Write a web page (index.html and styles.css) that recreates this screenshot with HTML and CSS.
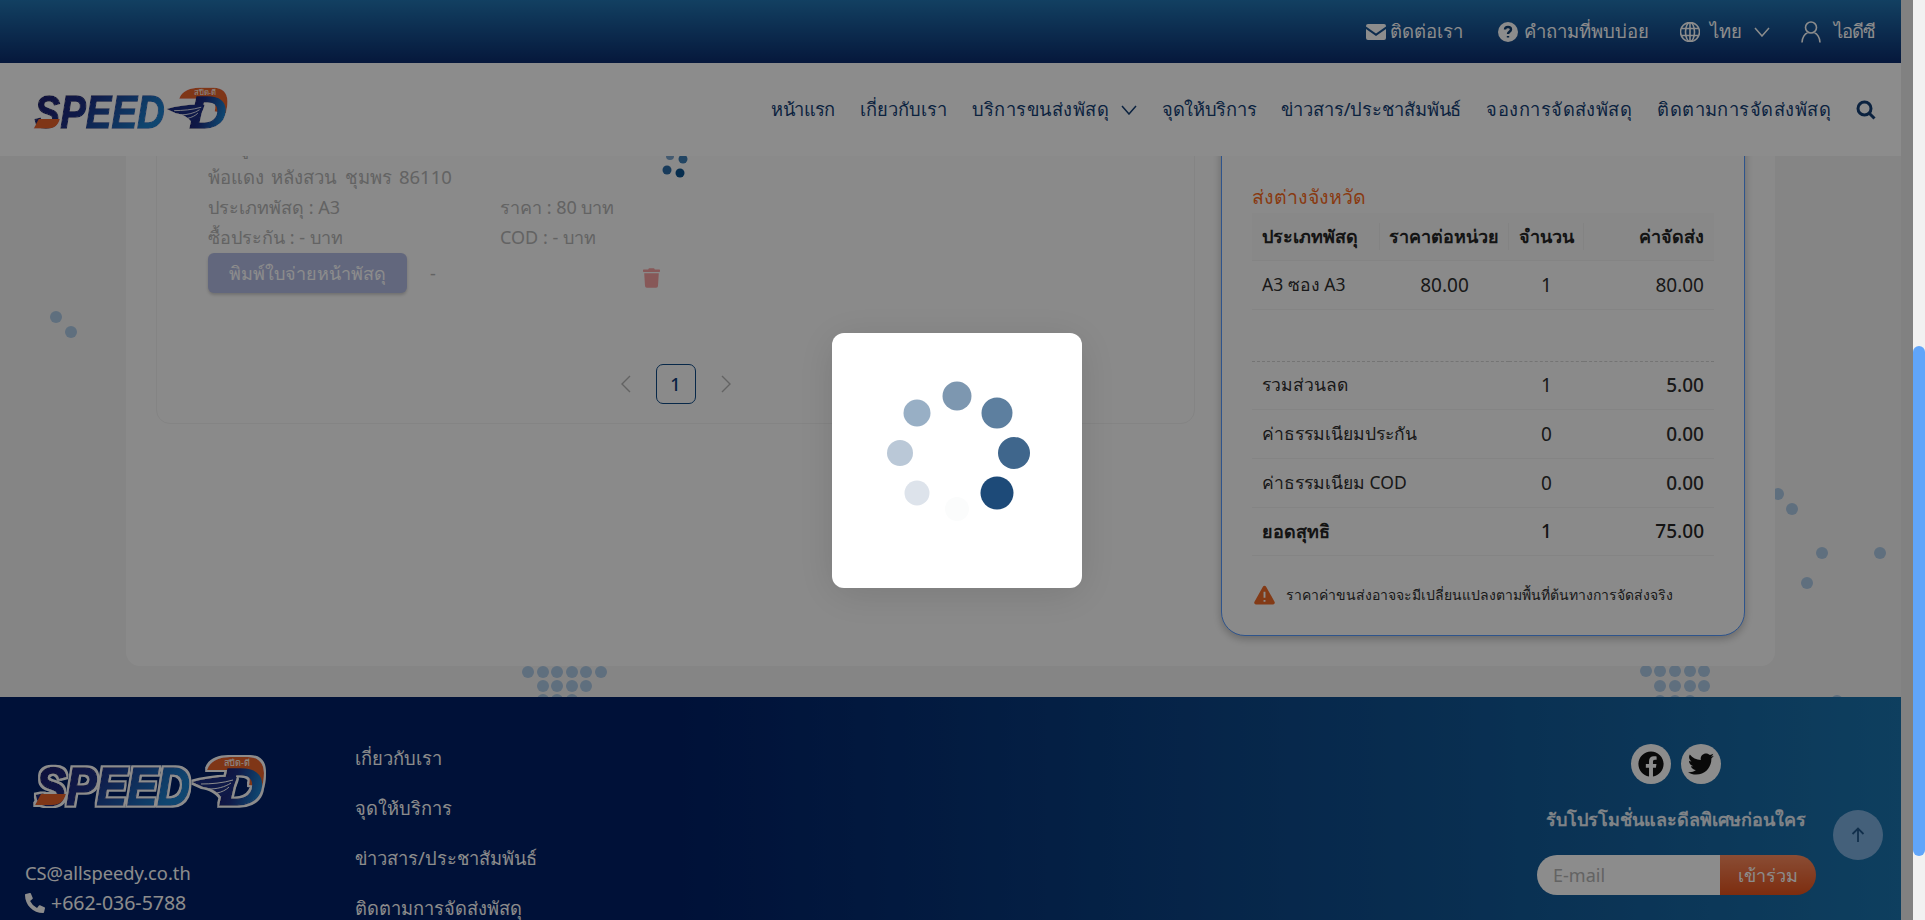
FILE: index.html
```html
<!DOCTYPE html>
<html lang="th">
<head>
<meta charset="utf-8">
<title>Speed-D</title>
<link rel="stylesheet" href="styles.css">
</head>
<body>
<svg class="defs" width="0" height="0" aria-hidden="true">
  <defs>
    <linearGradient id="logoBlue" x1="0" y1="0" x2="1" y2="0.35">
      <stop offset="0" stop-color="#1b1c68"/><stop offset=".45" stop-color="#1b2f84"/><stop offset="1" stop-color="#1f80cc"/>
    </linearGradient>
    <filter id="logoHalo" x="-5%" y="-15%" width="110%" height="130%">
      <feMorphology in="SourceAlpha" operator="dilate" radius="2.200" result="fat"/>
      <feFlood flood-color="#ffffff"/>
      <feComposite in2="fat" operator="in" result="halo"/>
      <feMerge><feMergeNode in="halo"/><feMergeNode in="SourceGraphic"/></feMerge>
    </filter>
    <symbol id="logo" viewBox="0 0 234 53">
      <g filter="url(#logoHalo)">
        <path class="logo-orange" d="M174 15c3-9 12-13 23-13h18c10 0 16 6 16 16 0 6-1 10-2 14l-13-2c2-10-1-15-10-15z"/>
        <text class="logo-word" x="3" y="50" textLength="154" lengthAdjust="spacingAndGlyphs">SPEED</text>
        <path class="logo-orange" d="M2 50l6-11h25c-2 7-6 11-14 11z"/>
        <text class="logo-d" x="186" y="50" textLength="44" lengthAdjust="spacingAndGlyphs">D</text>
        <path class="logo-wing" d="M159 27c14-4 30-6 45-5-2 9-7 16-16 20-3-5-10-9-18-10z"/>
      </g>
      <path class="logo-feather" d="M168 29c10 0 22-1 32-4M176 34c8 0 16-2 22-6M184 38c5-1 9-3 12-6"/>
      <text class="logo-tiny" x="191" y="11">สปีด-ดี</text>
    </symbol>
  </defs>
</svg>

<div class="page">
  <div class="page-inner">
    <header class="topbar">
      <a class="top-link contact"><svg class="ic-env" viewBox="0 0 20 16"><path d="M2 0h16a2 2 0 0 1 2 2v.6l-10 7-10-7V2a2 2 0 0 1 2-2zM0 5l10 7 10-7v9a2 2 0 0 1-2 2H2a2 2 0 0 1-2-2z"/></svg><span>ติดต่อเรา</span></a>
      <a class="top-link"><svg class="ic-q" viewBox="0 0 20 20"><circle cx="10" cy="10" r="10"/><path class="ic-q-mark" d="M7 7.6C7 5.9 8.3 5 10 5s3 1 3 2.5c0 2.3-3 2.3-3 4.4M10 14v1.6"/></svg><span>คำถามที่พบบ่อย</span></a>
      <a class="top-link lang"><svg class="ic-globe" viewBox="0 0 20 20"><circle cx="10" cy="10" r="9.5"/><ellipse cx="10" cy="10" rx="4.5" ry="9.5"/><path d="M1 6.5h18M1 13.5h18M10 .5v19"/></svg><span>ไทย</span><svg class="ic-chev" viewBox="0 0 16 10"><path d="M1 1l7 8 7-8"/></svg></a>
      <a class="top-link user"><svg class="ic-user" viewBox="0 0 20 22"><circle cx="10" cy="6.5" r="5.5"/><path d="M1 21.500c0-5 3-9 5.500-9.500M19 21.500c0-5-3-9-5.500-9.500"/></svg><span class="user-name">ไอดีซี</span></a>
    </header>

    <nav class="navbar">
      <svg class="nav-logo"><use href="#logo"/></svg>
      <div class="nav-links">
        <a class="tight-lg">หน้าแรก</a>
        <a>เกี่ยวกับเรา</a>
        <a class="has-chev wide">บริการขนส่งพัสดุ<svg class="ic-chev dark" viewBox="0 0 16 10"><path d="M1 1l7 8 7-8"/></svg></a>
        <a class="tight">จุดให้บริการ</a>
        <a class="tight-sm">ข่าวสาร/ประชาสัมพันธ์</a>
        <a class="wide">จองการจัดส่งพัสดุ</a>
        <a class="wide">ติดตามการจัดส่งพัสดุ</a>
        <svg class="ic-search" viewBox="0 0 20 20"><circle cx="8.500" cy="8.500" r="6.500"/><path d="M13.500 13.500L18.500 18.500"/></svg>
      </div>
    </nav>

    <main class="main">
      <svg class="deco deco-back" viewBox="0 0 1901 541" aria-hidden="true">
        <circle cx="56" cy="161" r="6"/><circle cx="71" cy="176" r="6"/>
        <circle cx="1778" cy="338" r="6"/><circle cx="1792" cy="353" r="6"/><circle cx="1822" cy="397" r="6"/><circle cx="1880" cy="397" r="6"/><circle cx="1807" cy="427" r="6"/>
        <circle cx="528" cy="516" r="6"/><circle cx="543" cy="516" r="6"/><circle cx="557" cy="516" r="6"/><circle cx="572" cy="516" r="6"/><circle cx="586" cy="516" r="6"/><circle cx="601" cy="516" r="6"/>
        <circle cx="543" cy="530" r="6"/><circle cx="557" cy="530" r="6"/><circle cx="572" cy="530" r="6"/><circle cx="586" cy="530" r="6"/>
        <circle cx="543" cy="544" r="6"/><circle cx="557" cy="544" r="6"/><circle cx="572" cy="544" r="6"/>
        <circle cx="1646" cy="515" r="6"/><circle cx="1660" cy="515" r="6"/><circle cx="1675" cy="515" r="6"/><circle cx="1690" cy="515" r="6"/><circle cx="1704" cy="515" r="6"/>
        <circle cx="1660" cy="530" r="6"/><circle cx="1675" cy="530" r="6"/><circle cx="1690" cy="530" r="6"/><circle cx="1704" cy="530" r="6"/>
        <circle cx="1660" cy="545" r="6"/><circle cx="1675" cy="545" r="6"/><circle cx="1690" cy="545" r="6"/><circle cx="1837" cy="545" r="6"/>
      </svg>

      <div class="card">
        <section class="left-panel">
          <article class="item">
            <p class="item-line">ที่ หมู่ 1</p>
            <p class="item-line addr">พ้อแดง หลังสวน ชุมพร 86110</p>
            <div class="item-grid">
              <span>ประเภทพัสดุ : A3</span><span>ราคา : 80 บาท</span>
              <span>ซื้อประกัน : - บาท</span><span>COD : - บาท</span>
            </div>
            <div class="item-actions">
              <button class="print-btn">พิมพ์ใบจ่ายหน้าพัสดุ</button>
              <span class="dash">-</span>
              <svg class="ic-trash" viewBox="0 0 448 512"><path d="M432 32H312l-9.400-18.700A24 24 0 0 0 281.100 0H166.800a23.720 23.720 0 0 0-21.400 13.300L136 32H16A16 16 0 0 0 0 48v32a16 16 0 0 0 16 16h416a16 16 0 0 0 16-16V48a16 16 0 0 0-16-16zM53.200 467a48 48 0 0 0 47.900 45h245.800a48 48 0 0 0 47.900-45L416 128H32z"/></svg>
            </div>
          </article>
          <div class="pager">
            <svg class="pager-arrow" viewBox="0 0 10 18"><path d="M9 1L1 9l8 8"/></svg>
            <span class="pager-num">1</span>
            <svg class="pager-arrow" viewBox="0 0 10 18"><path d="M1 1l8 8-8 8"/></svg>
          </div>
        </section>

        <aside class="right-panel">
          <h3 class="panel-title">ส่งต่างจังหวัด</h3>
          <table class="rates">
            <colgroup><col class="c1"><col class="c2"><col class="c3"><col class="c4"></colgroup>
            <thead>
              <tr><th class="ta-l"><span class="th-in">ประเภทพัสดุ</span></th><th><span class="th-in">ราคาต่อหน่วย</span></th><th><span class="th-in">จำนวน</span></th><th class="ta-r"><span class="th-in">ค่าจัดส่ง</span></th></tr>
            </thead>
            <tbody>
              <tr class="row-item"><td class="ta-l">A3 ซอง A3</td><td class="num">80.00</td><td class="num">1</td><td class="ta-r num">80.00</td></tr>
              <tr class="row-gap"><td colspan="4"></td></tr>
              <tr><td colspan="2" class="ta-l">รวมส่วนลด</td><td class="num">1</td><td class="ta-r num strong">5.00</td></tr>
              <tr class="row-tall"><td colspan="2" class="ta-l">ค่าธรรมเนียมประกัน</td><td class="num">0</td><td class="ta-r num strong">0.00</td></tr>
              <tr class="row-tall"><td colspan="2" class="ta-l">ค่าธรรมเนียม COD</td><td class="num">0</td><td class="ta-r num strong">0.00</td></tr>
              <tr class="row-total"><td colspan="2" class="ta-l">ยอดสุทธิ</td><td class="num">1</td><td class="ta-r num">75.00</td></tr>
            </tbody>
          </table>
          <p class="notice">
            <svg class="ic-warn" viewBox="0 0 22 20"><path class="warn-bg" d="M9.300 1.300a2 2 0 0 1 3.400 0l8.800 15.700a2 2 0 0 1-1.700 3H2.200a2 2 0 0 1-1.700-3z"/><path class="warn-mark" d="M11 6.500v6.500M11 15.200v1.800"/></svg>
            <span>ราคาค่าขนส่งอาจจะมีเปลี่ยนแปลงตามพื้นที่ต้นทางการจัดส่งจริง</span>
          </p>
        </aside>
      </div>

      <svg class="deco deco-front" viewBox="0 0 1901 541" aria-hidden="true">
        <circle class="d1" cx="670" cy="0" r="4"/><circle class="d2" cx="683" cy="3" r="4.500"/><circle class="d3" cx="667" cy="14" r="4.500"/><circle class="d4" cx="680" cy="17" r="4.500"/>
      </svg>
    </main>

    <footer class="footer">
      <div class="foot-contact">
        <svg class="foot-logo"><use href="#logo"/></svg>
        <p class="email">CS@allspeedy.co.th</p>
        <p class="phone"><svg class="ic-phone" viewBox="0 0 512 512"><path d="M497.390 361.800l-112-48a24 24 0 0 0-28 6.900l-49.600 60.600A370.660 370.660 0 0 1 130.600 204.110l60.600-49.600a23.940 23.940 0 0 0 6.900-28l-48-112A24.160 24.160 0 0 0 122.600.610l-104 24A24 24 0 0 0 0 48c0 256.500 207.900 464 464 464a24 24 0 0 0 23.400-18.600l24-104a24.290 24.290 0 0 0-14.010-27.600z"/></svg>+662-036-5788</p>
      </div>
      <div class="foot-links">
        <a>เกี่ยวกับเรา</a>
        <a>จุดให้บริการ</a>
        <a>ข่าวสาร/ประชาสัมพันธ์</a>
        <a>ติดตามการจัดส่งพัสดุ</a>
      </div>
      <div class="foot-promo">
        <div class="socials">
          <span class="social"><svg viewBox="0 0 512 512"><path d="M504 256C504 119 393 8 256 8S8 119 8 256c0 123.780 90.690 226.380 209.250 245V327.690h-63V256h63v-54.640c0-62.150 37-96.480 93.670-96.480 27.140 0 55.520 4.840 55.520 4.840v61h-31.280c-30.800 0-40.410 19.120-40.410 38.730V256h68.780l-11 71.690h-57.780V501C413.310 482.380 504 379.780 504 256z"/></svg></span>
          <span class="social"><svg viewBox="0 0 512 512"><path d="M459.370 151.716c.325 4.548.325 9.097.325 13.645 0 138.720-105.583 298.558-298.558 298.558-59.452 0-114.680-17.219-161.137-47.106 8.447.974 16.568 1.299 25.340 1.299 49.055 0 94.213-16.568 130.274-44.832-46.132-.975-84.792-31.188-98.112-72.772 6.498.974 12.995 1.624 19.818 1.624 9.421 0 18.843-1.300 27.614-3.573-48.081-9.747-84.143-51.980-84.143-102.985v-1.299c13.969 7.797 30.214 12.670 47.431 13.319-28.264-18.843-46.781-51.005-46.781-87.391 0-19.492 5.197-37.360 14.294-52.954 51.655 63.675 129.300 105.258 216.365 109.807-1.624-7.797-2.599-15.918-2.599-24.040 0-57.828 46.782-104.934 104.934-104.934 30.213 0 57.502 12.670 76.670 33.137 23.715-4.548 46.456-13.320 66.599-25.340-7.798 24.366-24.366 42.559-44.833 55.229 19.492-2.599 38.984-7.798 56.526-15.918-12.670 18.843-28.264 33.788-44.833 46.782z"/></svg></span>
        </div>
        <p class="promo-title">รับโปรโมชั่นและดีลพิเศษก่อนใคร</p>
        <form class="subscribe">
          <input class="sub-input" type="text" placeholder="E-mail">
          <button class="sub-btn" type="button">เข้าร่วม</button>
        </form>
      </div>
    </footer>
  </div>
  <button class="to-top" aria-label="top"><svg viewBox="0 0 14 16"><path d="M7 15V1.500M1.500 7L7 1.500 12.500 7"/></svg></button>
</div>

<div class="scrollbar"><div class="thumb"></div></div>

<div class="overlay"></div>
<div class="loader">
  <svg class="spinner" viewBox="0 0 250 255">
    <circle cx="125" cy="63" r="14.500" fill="#7d97b0"/>
    <circle cx="165" cy="80" r="15.500" fill="#5d7f9f"/>
    <circle cx="182" cy="120" r="16" fill="#3f668c"/>
    <circle cx="165" cy="160" r="16.500" fill="#1d4a78"/>
    <circle cx="125" cy="176" r="12" fill="#fbfcfc"/>
    <circle cx="85" cy="160" r="12.500" fill="#dde3eb"/>
    <circle cx="68" cy="120" r="13" fill="#bac8d7"/>
    <circle cx="85" cy="80" r="13.500" fill="#98afc5"/>
  </svg>
</div>
</body>
</html>
```

FILE: styles.css
```css
* { box-sizing: border-box; }
html, body { margin: 0; height: 100%; overflow: hidden; }
body {
  display: flex;
  font-family: "Noto Sans", "Open Sans", "DejaVu Sans", sans-serif;
  font-size: 18px;
  color: #2e2e2e;
  background: #f1f1f1;
}
p, h3 { margin: 0; }
.defs { position: absolute; }

.page { position: relative; flex: 1; height: 920px; overflow: hidden; background: #ececec; }
.page-inner { width: 1901px; }

/* top bar */
.topbar {
  height: 63px;
  display: flex;
  align-items: center;
  justify-content: flex-end;
  padding-right: 26px;
  gap: 31px;
  font-size: 18.500px;
  background: linear-gradient(#2275b2, #0b2c6d);
  color: #fff;
}
.top-link { display: flex; align-items: center; gap: 4px; }
.top-link.contact { margin-right: 4px; }
.top-link.lang { gap: 8px; }
.top-link.user { gap: 13px; }
.user-name { letter-spacing: -1px; }
.ic-env { width: 20px; height: 16px; fill: #fff; }
.ic-q { width: 20px; height: 20px; fill: #fff; margin-right: 2px; }
.ic-q-mark { fill: none; stroke: #0f3c6e; stroke-width: 2.4; }
.ic-globe { width: 20px; height: 20px; fill: none; stroke: #fff; stroke-width: 1.6; margin-right: 2px; }
.ic-chev { width: 16px; height: 10px; fill: none; stroke: #fff; stroke-width: 1.5; margin-left: 4px; }
.ic-chev.dark { stroke: #143e74; margin-left: 12px; }
.ic-user { width: 20px; height: 22px; fill: none; stroke: #fff; stroke-width: 1.6; }

/* nav */
.navbar {
  height: 93px;
  display: flex;
  align-items: center;
  justify-content: space-between;
  padding: 0 25px 0 32px;
  background: #fff;
}
.nav-logo { width: 198px; height: 45px; margin-top: -2px; }
.nav-links { display: flex; align-items: center; gap: 25px; font-size: 18.300px; color: #143e74; }
.has-chev { display: flex; align-items: center; }
.tight-lg { letter-spacing: -.65px; }
.tight { letter-spacing: -.3px; }
.tight-sm { letter-spacing: -.1px; }
.wide { letter-spacing: .45px; }
.ic-search { width: 20px; height: 20px; fill: none; stroke: #143e74; stroke-width: 3; }

/* logo */
.logo-orange { fill: #e8632a; }
.logo-tiny { font-size: 9px; fill: #fff; }
.logo-word, .logo-d {
  font-family: "Liberation Sans", sans-serif;
  font-weight: 700;
  font-style: italic;
  fill: url(#logoBlue);
  stroke: url(#logoBlue);
  stroke-width: 1.500px;
}
.logo-word { font-size: 54px; }
.logo-d { font-size: 52px; }
.logo-wing { fill: #1d2f84; }
.logo-feather { fill: none; stroke: #fff; stroke-width: 1; }

/* main */
.main { position: relative; height: 541px; overflow: hidden; padding-left: 126px; background: #f2f2f2; }
.deco { position: absolute; left: 0; top: 0; width: 1901px; height: 541px; pointer-events: none; }
.deco-back { fill: #adcae6; }
.deco-front { overflow: visible; }
.d1 { fill: #7aa4cc; }
.d2 { fill: #3f7fb5; }
.d3 { fill: #2c6ca6; }
.d4 { fill: #0b538f; }
.card {
  position: relative;
  width: 1649px;
  margin-top: -60px;
  padding: 30px;
  display: flex;
  align-items: flex-start;
  gap: 26px;
  border-radius: 14px;
  background: #fcfcfc;
}

.left-panel {
  width: 1039px;
  height: 298px;
  padding: 5px 20px 20px;
  border: 1px solid #f0f0f0;
  border-radius: 14px;
}
.item { width: 499px; height: 181px; padding: 0 16px 0 31px; border-radius: 8px; background: #fbfbfb; }
.item-line { line-height: 30px; color: #b4b4b4; }
.addr { font-size: 18.500px; word-spacing: 2.500px; }
.item-grid { display: grid; grid-template-columns: 292px 1fr; line-height: 30px; color: #b4b4b4; }
.item-actions { display: flex; align-items: center; height: 40px; margin-top: 1px; }
.print-btn {
  width: 199px;
  height: 40px;
  border: 0;
  border-radius: 6px;
  color: #fff;
  font: inherit;
  background: #b3bce4;
  box-shadow: 0 2px 3px rgba(0, 0, 0, .18);
}
.dash { margin-left: 23px; color: #b4b4b4; }
.ic-trash { width: 17px; height: 20px; margin: 10px 0 0 auto; fill: #f6a0a0; }

.pager { display: flex; align-items: center; justify-content: center; gap: 25px; margin-top: 51px; }
.pager-arrow { width: 10px; height: 18px; fill: none; stroke: #b4b4b4; stroke-width: 1.4; }
.pager-num {
  width: 40px;
  height: 40px;
  display: flex;
  align-items: center;
  justify-content: center;
  border: 1.500px solid #0e4a86;
  border-radius: 7px;
  font-weight: 500;
  color: #0e3a78;
}

.right-panel {
  width: 524px;
  height: 510px;
  padding: 55px 30px 0;
  border: 1px solid #5599ff;
  border-radius: 24px;
  box-shadow: 0 3px 8px rgba(0, 0, 0, .25);
  background: #fcfcfc;
}
.panel-title { font-size: 19.500px; font-weight: 400; line-height: 30px; margin-bottom: 1px; color: #f86a1e; }
.rates { width: 462px; border-collapse: collapse; table-layout: fixed; font-size: 17.500px; }
.c1 { width: 128px; }
.c2 { width: 129px; }
.c3 { width: 75px; }
.c4 { width: 130px; }
.rates th {
  height: 47px;
  padding: 0;
  font-size: 18px;
  font-weight: 700;
  background: #f8f8f8;
  border-bottom: 1px solid #f0f0f0;
  color: #262626;
}
.th-in { display: flex; align-items: center; justify-content: center; height: 27px; padding: 0 10px; border-right: 1px solid #efefef; white-space: nowrap; }
th:last-child .th-in { border-right: 0; justify-content: flex-end; }
th.ta-l .th-in { justify-content: flex-start; }
.rates td { height: 48px; padding: 0 10px; text-align: center; border-bottom: 1px solid #f0f0f0; }
.rates .ta-l { text-align: left; }
.rates .ta-r { text-align: right; }
.rates .num { font-size: 19px; }
.rates .row-item td { height: 49px; }
.rates .row-tall td { height: 49px; }
.rates .row-gap td { height: 52px; border-bottom: 1px dashed #d4d4d4; }
.rates .strong { font-weight: 500; }
.rates .row-total td { font-size: 18px; font-weight: 700; color: #262626; }
.rates .row-total .num { font-weight: 500; font-size: 19px; }
.notice { display: flex; align-items: center; gap: 11px; height: 24px; margin: 27px 0 0 2px; font-size: 14px; white-space: nowrap; }
.ic-warn { width: 21px; height: 20px; flex: none; }
.warn-bg { fill: #ee6a28; }
.warn-mark { fill: none; stroke: #fff; stroke-width: 2; }

/* footer */
.footer {
  position: relative;
  height: 223px;
  overflow: hidden;
  display: flex;
  align-items: flex-start;
  padding-left: 25px;
  color: #fff;
  background: linear-gradient(90deg, #001f66 0%, #001f66 35%, #1a73ad 100%);
}
.foot-contact { width: 330px; padding-top: 58px; line-height: 30px; }
.foot-logo { display: block; width: 234px; height: 53px; margin: 0 0 50px 8px; }
.email { font-size: 18.300px; }
.phone { display: flex; align-items: center; gap: 6px; font-size: 19.500px; }
.ic-phone { width: 20px; height: 20px; fill: #fff; }
.foot-links { display: flex; flex-direction: column; gap: 20px; padding-top: 46px; line-height: 30px; font-size: 18.300px; }
.foot-promo { width: 280px; margin-left: auto; margin-right: 85px; padding-top: 47px; text-align: center; }
.socials { display: flex; justify-content: center; gap: 10px; }
.social { width: 40px; height: 40px; display: flex; align-items: center; justify-content: center; border-radius: 50%; background: #fff; }
.social svg { width: 26px; height: 26px; fill: #111; }
.promo-title { margin-top: 20px; line-height: 30px; font-weight: 600; color: #e8eef6; white-space: nowrap; }
.subscribe { display: flex; margin: 21px 0 0 1px; }
.sub-input {
  width: 183px;
  height: 40px;
  padding: 0 16px;
  border: 0;
  border-radius: 20px 0 0 20px;
  font: inherit;
  background: #fff;
}
.sub-input::placeholder { color: #b4b4b4; }
.sub-btn {
  width: 97px;
  height: 40px;
  border: 0;
  border-radius: 0 20px 20px 0;
  color: #fff;
  font: inherit;
  background: linear-gradient(#fb8c60, #e4521c);
}

.to-top {
  position: absolute;
  left: 1833px;
  top: 810px;
  width: 50px;
  height: 50px;
  display: flex;
  align-items: center;
  justify-content: center;
  padding: 0;
  border: 0;
  border-radius: 50%;
  background: #7db0de;
}
.to-top svg { width: 14px; height: 16px; fill: none; stroke: #20578a; stroke-width: 1.8; }

/* scrollbar */
.scrollbar { flex: none; width: 12px; height: 920px; padding-top: 346px; background: #f1f1f1; position: relative; z-index: 5; }
.thumb { height: 510px; border-radius: 6px; background: #60a5fa; }

/* loading overlay */
.overlay { position: fixed; left: 0; top: 0; width: 1913px; height: 920px; background: rgba(0, 0, 0, .45); z-index: 3; }
.loader {
  position: fixed;
  left: 832px;
  top: 333px;
  width: 250px;
  height: 255px;
  border-radius: 12px;
  background: #fff;
  box-shadow: 0 6px 40px rgba(0, 0, 0, .12);
  z-index: 4;
}
.spinner { display: block; width: 250px; height: 255px; }
```
